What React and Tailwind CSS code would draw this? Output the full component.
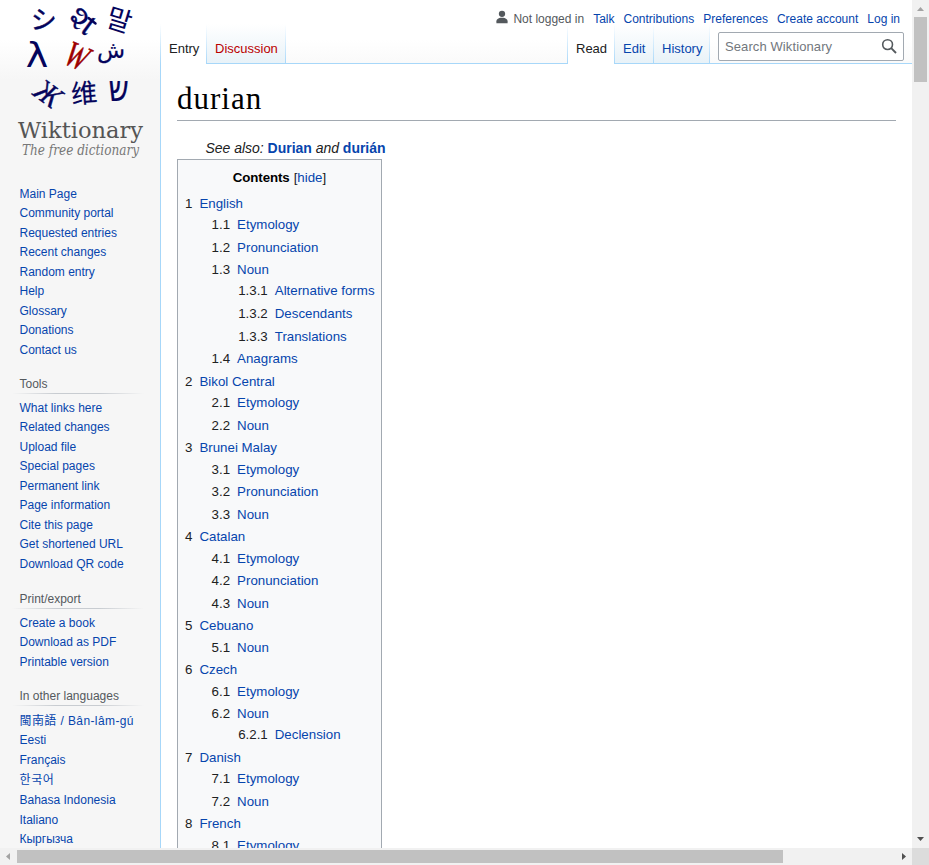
import React from "react";

const mainLinks = ["Main Page", "Community portal", "Requested entries", "Recent changes", "Random entry", "Help", "Glossary", "Donations", "Contact us"];
const toolLinks = ["What links here", "Related changes", "Upload file", "Special pages", "Permanent link", "Page information", "Cite this page", "Get shortened URL", "Download QR code"];
const printLinks = ["Create a book", "Download as PDF", "Printable version"];
const languageLinks = ["閩南語 / Bân-lâm-gú", "Eesti", "Français", "한국어", "Bahasa Indonesia", "Italiano", "Кыргызча"];

const contents = [
  { title: "English", children: [
    { title: "Etymology" },
    { title: "Pronunciation" },
    { title: "Noun", children: [{ title: "Alternative forms" }, { title: "Descendants" }, { title: "Translations" }] },
    { title: "Anagrams" },
  ] },
  { title: "Bikol Central", children: [{ title: "Etymology" }, { title: "Noun" }] },
  { title: "Brunei Malay", children: [{ title: "Etymology" }, { title: "Pronunciation" }, { title: "Noun" }] },
  { title: "Catalan", children: [{ title: "Etymology" }, { title: "Pronunciation" }, { title: "Noun" }] },
  { title: "Cebuano", children: [{ title: "Noun" }] },
  { title: "Czech", children: [{ title: "Etymology" }, { title: "Noun", children: [{ title: "Declension" }] }] },
  { title: "Danish", children: [{ title: "Etymology" }, { title: "Noun" }] },
  { title: "French", children: [{ title: "Etymology" }] },
];

function Logo() {
  const sans = '"Noto Sans", "Noto Sans CJK SC", "DejaVu Sans", sans-serif';
  return (
    <svg width="160" height="164" viewBox="0 0 160 164" className="block shrink-0">
      <g fill="#04045c" stroke="#04045c" strokeWidth="0.4" textAnchor="middle" fontFamily={sans}>
        <text transform="translate(43 29.500) rotate(4)" fontSize="26" fontFamily="Noto Sans CJK JP">シ</text>
        <text transform="translate(76 29) rotate(36)" fontSize="33" strokeWidth="0.3">શ</text>
        <path d="M88.500 18l7 5.500" strokeWidth="2.500" strokeLinecap="round" />
        <text transform="translate(116.500 29.500) rotate(17)" fontSize="27" fontFamily="Noto Sans CJK KR" strokeWidth="0">말</text>
        <text transform="translate(37 66.500) scale(1.15 1)" fontSize="33" fontFamily="DejaVu Sans" strokeWidth="0">λ</text>
        <text transform="translate(111 57.500)" fontSize="23" fontFamily="DejaVu Sans" strokeWidth="0.2">ش</text>
        <text transform="translate(42 102) rotate(36) scale(0.9 1)" fontSize="31" fontFamily="Liberation Serif" fontStyle="italic" strokeWidth="0.5">Ж</text>
        <text transform="translate(85 102.500) rotate(-5)" fontSize="26" fontFamily="Noto Sans CJK SC" strokeWidth="0.2">维</text>
        <text transform="translate(118.500 101) scale(0.95 1.22)" fontSize="30" fontFamily="DejaVu Sans" strokeWidth="0.2">ש</text>
      </g>
      <text transform="translate(72 67) rotate(24) scale(0.95 1.3)" textAnchor="middle" fontSize="28" fontStyle="italic" fill="#9c0000" stroke="#9c0000" strokeWidth="0.4" fontFamily="Liberation Serif">W</text>
      <text x="18" y="137.500" textLength="125" lengthAdjust="spacingAndGlyphs" fontSize="23" fill="#555" fontFamily="DejaVu Serif Condensed, DejaVu Serif, serif">Wiktionary</text>
      <text x="22" y="154.500" textLength="117" lengthAdjust="spacingAndGlyphs" fontSize="15.500" fontStyle="italic" fill="#777" fontFamily="DejaVu Serif Condensed, DejaVu Serif, serif">The free dictionary</text>
    </svg>
  );
}

function SideSection({ title, links, className }) {
  return (
    <nav className={className}>
      {title && (
        <div className="ml-2 mr-4 h-[19px]">
          <h3 className="h-[18px] pl-[11.500px] text-[12px] leading-[18px] text-[#54595d]">{title}</h3>
          <div className="ml-1 h-px bg-[linear-gradient(to_right,rgba(200,204,209,0),#c8ccd1_33%,#c8ccd1_66%,rgba(200,204,209,0))]" />
        </div>
      )}
      <ul className={title ? "-mb-[0.500px] pl-[19.500px] pt-[5px]" : "pl-[19.500px]"}>
        {links.map((l) => {
          if (l.startsWith("閩")) {
            return <li key={l} className="h-[20.5px] whitespace-nowrap pt-px text-[12px] leading-[19.5px] tracking-[0.4px] text-[#0645ad]">{l}</li>;
          }
          if (l === "한국어") {
            return <li key={l} className="h-[21px] whitespace-nowrap text-[12px] leading-[20.5px] tracking-[0.6px] text-[#0645ad]">{l}</li>;
          }
          return <li key={l} className="h-[19.5px] whitespace-nowrap text-[12px] leading-[19.5px] text-[#0645ad]">{l}</li>;
        })}
      </ul>
    </nav>
  );
}

function TocList({ items, prefix = "", nested = false }) {
  return (
    <ul className={nested ? "ml-[26.6px]" : ""}>
      {items.map((item, i) => {
        const n = prefix + (i + 1);
        return (
          <li key={n} className="mb-[1.33px]">
            <div className="flex h-[21.28px] leading-[21.28px]">
              <span className="pr-[7px] text-[#202122]">{n}</span>
              <span className="whitespace-nowrap text-[#0645ad]">{item.title}</span>
            </div>
            {item.children && <TocList items={item.children} prefix={n + "."} nested />}
          </li>
        );
      })}
    </ul>
  );
}

function Divider() {
  return <div className="w-px shrink-0 bg-linear-to-b from-white to-[#a7d7f9]" />;
}

function Tab({ children, active, className }) {
  return (
    <div className={(active ? "h-10 bg-white " : "h-10 border-b border-[#a7d7f9] bg-linear-to-b from-white to-[#e8f2f8] ") + "shrink-0 whitespace-nowrap pl-2 pt-[15px] text-[13px] leading-[20px] " + className}>
      {children}
    </div>
  );
}

function Header() {
  return (
    <header className="h-16">
      <div className="flex h-6 items-start justify-end pr-3 pt-[12px] text-[12px] leading-[15px] text-[#0645ad]">
        <svg width="14" height="14" viewBox="0 0 20 20" className="-mt-[2px] mr-1" fill="#54595d">
          <path d="M10 11c-5.920 0-8 3-8 5v3h16v-3c0-2-2.080-5-8-5z" />
          <circle cx="10" cy="5.500" r="4.500" />
        </svg>
        <span className="mr-[9px] text-[#54595d]">Not logged in</span>
        <div className="flex gap-[9px]">
          <span>Talk</span>
          <span>Contributions</span>
          <span>Preferences</span>
          <span>Create account</span>
          <span>Log in</span>
        </div>
      </div>
      <div className="flex h-10">
        <Tab active className="w-[45px] text-[#202122]">Entry</Tab>
        <Divider />
        <Tab className="w-[78px] text-[#ba0000]">Discussion</Tab>
        <Divider />
        <div className="flex-1 border-b border-[#a7d7f9]" />
        <Divider />
        <Tab active className="w-[46px] text-[#202122]">Read</Tab>
        <Divider />
        <Tab className="w-[38px] text-[#0645ad]">Edit</Tab>
        <Divider />
        <Tab className="w-[55px] text-[#0645ad]">History</Tab>
        <Divider />
        <div className="w-[202px] border-b border-[#a7d7f9] pl-2 pt-2">
          <div className="flex h-[29px] w-[186px] items-center justify-between rounded-[2px] border border-[#a2a9b1] bg-white pl-[6px] pr-[6px]">
            <span className="text-[13px] tracking-[0.1px] text-[#72777d]">Search Wiktionary</span>
            <svg width="16" height="16" viewBox="0 0 16 16" fill="none" stroke="#54595d" className="-mt-[2px]">
              <circle cx="6.600" cy="6.600" r="4.900" strokeWidth="1.600" />
              <path d="M10.200 10.200L15 15" strokeWidth="1.900" />
            </svg>
          </div>
        </div>
      </div>
    </header>
  );
}

function VerticalScrollbar() {
  return (
    <div className="flex h-[848px] w-[17px] flex-col items-center bg-[#f1f1f1]">
      <svg width="17" height="17"><path d="M5 11h7L8.500 7z" fill="#a3a3a3" /></svg>
      <div className="h-[65px] w-[13px] bg-[#c1c1c1]" />
      <div className="flex-1" />
      <svg width="17" height="17"><path d="M5 6h7L8.500 10z" fill="#505050" /></svg>
    </div>
  );
}

function HorizontalScrollbar() {
  return (
    <div className="flex h-[17px] w-full items-center bg-[#f1f1f1]">
      <svg width="17" height="17"><path d="M10 5v7L6 8.500z" fill="#a3a3a3" /></svg>
      <div className="h-[13px] w-[766px] bg-[#c1c1c1]" />
      <div className="flex-1" />
      <svg width="17" height="17"><path d="M7 5v7l4-3.500z" fill="#505050" /></svg>
      <div className="h-[17px] w-[17px] bg-[#dcdcdc]" />
    </div>
  );
}

export default function App() {
  return (
    <div className="h-[865px] w-[929px] overflow-hidden font-['Liberation_Sans','Noto_Sans_CJK_TC','Noto_Sans_CJK_KR',sans-serif]">
      <div className="flex h-[848px]">
        <div className="flex h-[848px] w-[912px] overflow-hidden bg-[#f6f6f6] bg-[linear-gradient(#fff_50%,#f6f6f6_100%)] bg-[length:100%_80px] bg-no-repeat">
          <aside className="h-[848px] w-40 shrink-0 overflow-hidden">
            <Logo />
            <SideSection links={mainLinks} className="mt-[20.500px]" />
            <SideSection title="Tools" links={toolLinks} className="mt-[14.500px]" />
            <SideSection title="Print/export" links={printLinks} className="mt-[16px]" />
            <SideSection title="In other languages" links={languageLinks} className="mt-[15px]" />
          </aside>
          <div className="h-[848px] w-px shrink-0 bg-[linear-gradient(#fff_24px,#a7d7f9_64px)]" />
          <div className="h-[848px] min-w-0 flex-1">
            <Header />
            <main className="h-[784px] overflow-hidden bg-white px-4">
              <h1 className="h-[57px] border-b border-[#a2a9b1] pt-[16px] font-['Liberation_Serif',serif] text-[31px] leading-[38px] tracking-[1px] text-black">durian</h1>
              <p className="mt-4 h-[22px] pl-[28.500px] text-[14px] leading-[22px] tracking-[-0.02px] text-[#202122]">
                <i>See also:</i> <b className="text-[#0645ad]">Durian</b> <i>and</i> <b className="text-[#0645ad]">durián</b>
              </p>
              <section className="h-[760px] w-[205px] border border-[#a2a9b1] bg-[#f8f9fa] px-[7px] pt-[7px] text-[13.300px]">
                <div className="mb-[3.750px] flex h-[22px] justify-center gap-1 leading-[22px]">
                  <h2 className="font-bold tracking-[-0.1px] text-black">Contents</h2>
                  <span className="text-[#202122]">[<span className="text-[#0645ad]">hide</span>]</span>
                </div>
                <TocList items={contents} />
              </section>
            </main>
          </div>
        </div>
        <VerticalScrollbar />
      </div>
      <HorizontalScrollbar />
    </div>
  );
}
